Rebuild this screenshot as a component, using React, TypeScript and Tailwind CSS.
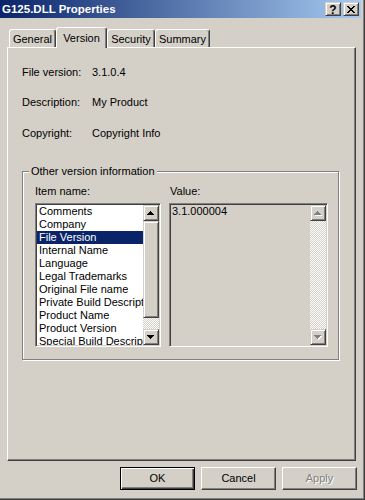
import type { ReactNode } from 'react';

const raised =
  'border border-t-[#d4d0c8] border-l-[#d4d0c8] border-r-[#404040] border-b-[#404040] shadow-[inset_1px_1px_0_#ffffff,inset_-1px_-1px_0_#808080] bg-[#d4d0c8]';
const sunken =
  'border border-t-[#808080] border-l-[#808080] border-r-white border-b-white shadow-[inset_1px_1px_0_#404040,inset_-1px_-1px_0_#d4d0c8]';
const track =
  'bg-[image:repeating-conic-gradient(#ffffff_0%_25%,#d4d0c8_0%_50%)] bg-[length:2px_2px]';

const Arrow = ({ down, disabled }: { down?: boolean; disabled?: boolean }) => {
  const d = down
    ? 'M0 0H7V1H6V2H5V3H4V4H3V3H2V2H1V1H0Z'
    : 'M3 0H4V1H5V2H6V3H7V4H0V3H1V2H2V1H3Z';
  return (
    <svg width="8" height="5" viewBox="0 0 8 5" shapeRendering="crispEdges">
      {disabled && <path d={d} fill="#ffffff" transform="translate(1 1)" />}
      <path d={d} fill={disabled ? '#808080' : '#000000'} />
    </svg>
  );
};

const ScrollBtn = ({ down, disabled }: { down?: boolean; disabled?: boolean }) => (
  <div className={`flex h-[16px] w-[16px] items-center justify-center ${raised}`}>
    <Arrow down={down} disabled={disabled} />
  </div>
);

const Tab = ({ label, w, active }: { label: string; w: string; active?: boolean }) => (
  <div
    className={`flex items-center justify-center rounded-t-[3px] border-t border-l border-r border-t-white border-l-white border-r-[#404040] bg-[#d4d0c8] shadow-[inset_-1px_0_0_#808080] ${w} ${
      active ? 'relative z-10 -mb-px h-[21px]' : 'h-[18px] pt-[2px]'
    }`}
  >
    {label}
  </div>
);

const Button = ({ children, primary, disabled }: { children: ReactNode; primary?: boolean; disabled?: boolean }) => (
  <div
    className={`flex h-[23px] w-[75px] items-center justify-center ${
      primary
        ? 'border border-black shadow-[inset_1px_1px_0_#ffffff,inset_-1px_-1px_0_#404040,inset_-2px_-2px_0_#808080]'
        : 'border border-t-white border-l-white border-r-[#404040] border-b-[#404040] shadow-[inset_-1px_-1px_0_#808080]'
    } ${disabled ? 'text-[#808080] [text-shadow:1px_1px_0_#ffffff]' : ''}`}
  >
    {children}
  </div>
);

const items = [
  'Comments',
  'Company',
  'File Version',
  'Internal Name',
  'Language',
  'Legal Trademarks',
  'Original File name',
  'Private Build Description',
  'Product Name',
  'Product Version',
  'Special Build Description',
];

export default function App() {
  return (
    <div className="h-[500px] w-[365px] overflow-hidden bg-[#d4d0c8] font-['Liberation_Sans',Arial,sans-serif] text-[11px] leading-[13px] text-black">
      <div className="h-full border-r border-b border-[#404040]">
        <div className="flex h-full flex-col border-r border-b border-[#808080] pr-[2px] pb-[2px]">
          {/* title bar */}
          <div className="flex h-[18px] items-center bg-linear-to-r/srgb from-[#0a246a] to-[#a6caf0] pl-[2px] pr-[2px]">
            <span className="flex-1 text-[11.5px] font-bold text-white">G125.DLL Properties</span>
            <div className={`flex h-[14px] w-[16px] items-center justify-center pt-px text-[12px] font-bold leading-none ${raised}`}>?</div>
            <div className={`ml-[2px] flex h-[14px] w-[16px] items-center justify-center ${raised}`}>
              <svg width="8" height="7" viewBox="0 0 8 7" shapeRendering="crispEdges">
                <path d="M0 0H2V1H3V2H5V1H6V0H8V1H7V2H6V3H5V4H6V5H7V6H8V7H6V6H5V5H3V6H2V7H0V6H1V5H2V4H3V3H2V2H1V1H0Z" fill="#000" />
              </svg>
            </div>
          </div>

          {/* tabs + page */}
          <div className="pt-[9px] pl-[7px] pr-[5px]">
            <div className="flex h-[20px] items-end pl-[2px]">
              <Tab label="General" w="w-[47px]" />
              <Tab label="Version" w="w-[51px]" active />
              <Tab label="Security" w="w-[48px]" />
              <Tab label="Summary" w="w-[55px]" />
            </div>
            <div className="h-[414px] border border-t-white border-l-white border-r-[#404040] border-b-[#404040] px-[14px] shadow-[inset_-1px_-1px_0_#808080]">
              <div className="mt-[18px] flex h-[13px]">
                <span className="w-[70px]">File version:</span>
                <span>3.1.0.4</span>
              </div>
              <div className="mt-[17px] flex h-[13px]">
                <span className="w-[70px]">Description:</span>
                <span>My Product</span>
              </div>
              <div className="mt-[18px] flex h-[13px]">
                <span className="w-[70px]">Copyright:</span>
                <span>Copyright Info</span>
              </div>

              {/* group box */}
              <div className="relative mt-[31px] h-[189px] w-[317px] border border-[#808080] shadow-[inset_1px_1px_0_#ffffff,1px_1px_0_#ffffff]">
                <span className="absolute -top-[7px] left-[6px] bg-[#d4d0c8] px-[2px]">Other version information</span>
                <div className="flex pt-[13px] pl-[12px]">
                  <div className="w-[126px]">
                    <div className="h-[13px]">Item name:</div>
                    <div className={`mt-[5px] flex h-[144px] bg-white p-px ${sunken}`}>
                      <div className="flex-1 overflow-hidden whitespace-nowrap">
                        {items.map((it) => (
                          <div
                            key={it}
                            className={`h-[13px] pl-[2px] ${it === 'File Version' ? 'bg-[#0a246a] text-white' : ''}`}
                          >
                            {it}
                          </div>
                        ))}
                      </div>
                      <div className="flex w-[16px] flex-col">
                        <ScrollBtn />
                        <div className={`h-[97px] ${raised}`} />
                        <div className={`flex-1 ${track}`} />
                        <ScrollBtn down />
                      </div>
                    </div>
                  </div>
                  <div className="ml-[8px] w-[159px]">
                    <div className="h-[13px] pl-px">Value:</div>
                    <div className={`mt-[5px] flex h-[144px] p-px ${sunken}`}>
                      <div className="flex-1 pl-px">3.1.000004</div>
                      <div className="flex w-[16px] flex-col">
                        <ScrollBtn disabled />
                        <div className={`flex-1 ${track}`} />
                        <ScrollBtn down disabled />
                      </div>
                    </div>
                  </div>
                </div>
              </div>
            </div>
          </div>

          {/* buttons */}
          <div className="mt-[6px] flex justify-end gap-[6px] pr-[4px]">
            <Button primary>OK</Button>
            <Button>Cancel</Button>
            <Button disabled>Apply</Button>
          </div>
        </div>
      </div>
    </div>
  );
}
